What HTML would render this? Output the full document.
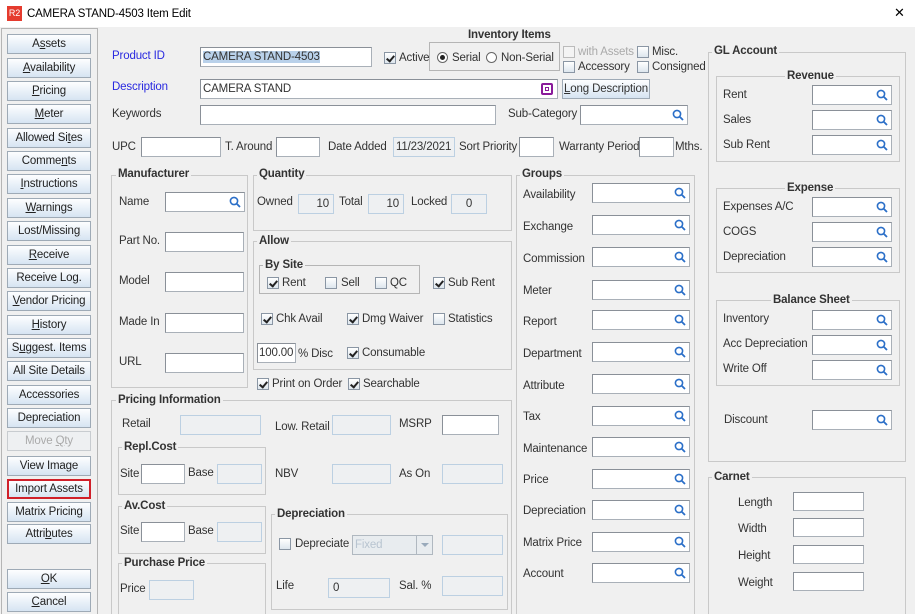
<!DOCTYPE html>
<html style="overflow:hidden;width:915px;height:614px"><head><meta charset="utf-8">
<style>
*{box-sizing:border-box;margin:0;padding:0}
body{width:915px;height:614px;overflow:hidden;background:#f0f0f0;font-family:"Liberation Sans",sans-serif;font-size:11.5px;letter-spacing:-0.15px;color:#333;position:relative}
.a{position:absolute}
.l{position:absolute;white-space:nowrap;line-height:14px}
.i{position:absolute;height:20px;background:#fff;border:1px solid #a9b0b8;border-top-color:#8a9098;border-left-color:#8a9098;line-height:18px;padding-left:2px;white-space:nowrap;overflow:hidden}
.ro{position:absolute;height:20px;background:#eef0f2;border:1px solid #bcd0e2;line-height:18px;padding:0 4px;text-align:right}
.g{position:absolute;border:1px solid #c9c9c9}
.lg{position:absolute;font-weight:bold;background:#f0f0f0;padding:0 2px;line-height:13px;white-space:nowrap;color:#333}
.b{position:absolute;left:7px;width:84px;height:20px;border:1px solid #9eaab6;background:linear-gradient(#fdfeff,#d6e4f2);text-align:center;line-height:18px;color:#222;white-space:nowrap}
.cb{position:absolute;width:12px;height:12px;border:1px solid #8a96a4;background:linear-gradient(#fff,#dde6ee)}
.cb.c::after{content:"";position:absolute;left:3px;top:1px;width:3px;height:6px;border-right:2px solid #222;border-bottom:2px solid #222;transform:rotate(40deg)}
.s{position:absolute;right:3px;top:3px;width:12px;height:12px}
u{text-decoration:underline}
</style></head><body>
<div class="a" style="left:0;top:0;width:915px;height:27px;background:#fff"></div>
<div class="a" style="left:7px;top:6px;width:15px;height:15px;background:#e53b2e;color:#fff;font-size:9px;line-height:15px;text-align:center">R2</div>
<div class="l" style="left:27px;top:7px;color:#000">CAMERA STAND-4503 Item Edit</div>
<div class="l" style="left:894px;top:6px;font-size:13px;color:#000">✕</div>

<div class="a" style="left:1px;top:28px;width:97px;height:586px;border:1px solid #b5b5b5;border-bottom:none"></div>
<div class="b" style="top:34px">A<u>s</u>sets</div>
<div class="b" style="top:58px"><u>A</u>vailability</div>
<div class="b" style="top:81px"><u>P</u>ricing</div>
<div class="b" style="top:104px"><u>M</u>eter</div>
<div class="b" style="top:128px">Allowed Si<u>t</u>es</div>
<div class="b" style="top:151px">Comme<u>n</u>ts</div>
<div class="b" style="top:174px"><u>I</u>nstructions</div>
<div class="b" style="top:198px"><u>W</u>arnings</div>
<div class="b" style="top:221px">Lost/Missin<u>g</u></div>
<div class="b" style="top:245px"><u>R</u>eceive</div>
<div class="b" style="top:268px">Receive Log.</div>
<div class="b" style="top:291px"><u>V</u>endor Pricing</div>
<div class="b" style="top:315px"><u>H</u>istory</div>
<div class="b" style="top:338px">S<u>u</u>ggest. Items</div>
<div class="b" style="top:361px">All Site Details</div>
<div class="b" style="top:385px">Accessories</div>
<div class="b" style="top:408px">Depreciation</div>
<div class="b" style="top:431px;color:#aaa;background:#eef0f2;border-color:#c8ccd0">Move <u>Q</u>ty</div>
<div class="b" style="top:456px">View Image</div>
<div class="b" style="top:479px;border:2px solid #d0202a;line-height:16px">Import Assets</div>
<div class="b" style="top:502px">Matrix Pricing</div>
<div class="b" style="top:524px">Attri<u>b</u>utes</div>
<div class="b" style="top:569px"><u>O</u>K</div>
<div class="b" style="top:592px"><u>C</u>ancel</div>

<div class="l" style="left:468px;top:28px;font-weight:bold">Inventory Items</div>
<div class="l" style="left:112px;top:49px;color:#2929e0">Product ID</div>
<div class="i" style="left:200px;top:47px;width:172px"><span style="background:#b9d1ea">CAMERA STAND-4503</span></div>
<div class="cb c" style="left:384px;top:52px"></div><div class="l" style="left:399px;top:51px">Active</div>
<div class="g" style="left:429px;top:42px;width:131px;height:29px;border-color:#b5b5b5"></div>
<div class="a" style="left:437px;top:52px;width:11px;height:11px;border:1px solid #666;border-radius:50%;background:#fff"><div class="a" style="left:2px;top:2px;width:5px;height:5px;border-radius:50%;background:#222"></div></div>
<div class="l" style="left:452px;top:51px">Serial</div>
<div class="a" style="left:486px;top:52px;width:11px;height:11px;border:1px solid #666;border-radius:50%;background:#fff"></div>
<div class="l" style="left:501px;top:51px">Non-Serial</div>
<div class="cb" style="left:563px;top:46px;border-color:#bbb;background:#f4f4f4"></div><div class="l" style="left:578px;top:45px;color:#aaa">with Assets</div>
<div class="cb" style="left:637px;top:46px"></div><div class="l" style="left:652px;top:45px">Misc.</div>
<div class="cb" style="left:563px;top:61px"></div><div class="l" style="left:578px;top:60px">Accessory</div>
<div class="cb" style="left:637px;top:61px"></div><div class="l" style="left:652px;top:60px">Consigned</div>

<div class="l" style="left:112px;top:80px;color:#2929e0">Description</div>
<div class="i" style="left:200px;top:79px;width:358px">CAMERA STAND</div>
<div class="a" style="left:541px;top:83px;width:12px;height:12px;border:2px solid #8a1a9a;border-radius:2px;background:#fff"><div class="a" style="left:2px;top:2px;width:4px;height:4px;border:1px solid #8a1a9a"></div></div>
<div class="a" style="left:562px;top:79px;width:88px;height:20px;border:1px solid #9eaab6;background:linear-gradient(#fdfeff,#d6e4f2);line-height:18px;text-align:center;white-space:nowrap"><u>L</u>ong Description</div>

<div class="l" style="left:112px;top:107px">Keywords</div>
<div class="i" style="left:200px;top:105px;width:296px"></div>
<div class="l" style="left:508px;top:107px">Sub-Category</div>
<div class="i" style="left:580px;top:105px;width:108px"><svg class="s" viewBox="0 0 12 12"><circle cx="5" cy="5" r="3.6" fill="none" stroke="#2b6fc8" stroke-width="1.6"/><path d="M7.6 7.6L11 11" stroke="#2b6fc8" stroke-width="1.8"/></svg></div>

<div class="l" style="left:112px;top:140px">UPC</div>
<div class="i" style="left:141px;top:137px;width:80px"></div>
<div class="l" style="left:225px;top:140px">T. Around</div>
<div class="i" style="left:276px;top:137px;width:44px"></div>
<div class="l" style="left:328px;top:140px">Date Added</div>
<div class="ro" style="left:393px;top:137px;width:62px;padding:0 2px;text-align:left">11/23/2021</div>
<div class="l" style="left:459px;top:140px">Sort Priority</div>
<div class="i" style="left:519px;top:137px;width:35px"></div>
<div class="l" style="left:559px;top:140px">Warranty Period</div>
<div class="i" style="left:639px;top:137px;width:35px"></div>
<div class="l" style="left:675px;top:140px">Mths.</div>

<div class="g" style="left:111px;top:175px;width:137px;height:213px"></div>
<div class="lg" style="left:116px;top:168px">Manufacturer</div>
<div class="l" style="left:119px;top:195px">Name</div>
<div class="i" style="left:165px;top:192px;width:80px"><svg class="s" viewBox="0 0 12 12"><circle cx="5" cy="5" r="3.6" fill="none" stroke="#2b6fc8" stroke-width="1.6"/><path d="M7.6 7.6L11 11" stroke="#2b6fc8" stroke-width="1.8"/></svg></div>
<div class="l" style="left:119px;top:234px">Part No.</div><div class="i" style="left:165px;top:232px;width:79px"></div>
<div class="l" style="left:119px;top:274px">Model</div><div class="i" style="left:165px;top:272px;width:79px"></div>
<div class="l" style="left:119px;top:315px">Made In</div><div class="i" style="left:165px;top:313px;width:79px"></div>
<div class="l" style="left:119px;top:355px">URL</div><div class="i" style="left:165px;top:353px;width:79px"></div>

<div class="g" style="left:253px;top:175px;width:259px;height:56px"></div>
<div class="lg" style="left:257px;top:168px">Quantity</div>
<div class="l" style="left:257px;top:195px">Owned</div><div class="ro" style="left:298px;top:194px;width:36px">10</div>
<div class="l" style="left:339px;top:195px">Total</div><div class="ro" style="left:368px;top:194px;width:36px">10</div>
<div class="l" style="left:411px;top:195px">Locked</div><div class="ro" style="left:451px;top:194px;width:36px;text-align:center">0</div>

<div class="g" style="left:253px;top:241px;width:259px;height:129px"></div>
<div class="lg" style="left:257px;top:235px">Allow</div>
<div class="g" style="left:259px;top:265px;width:161px;height:29px;border-color:#b5b5b5"></div>
<div class="lg" style="left:263px;top:259px">By Site</div>
<div class="cb c" style="left:267px;top:277px"></div><div class="l" style="left:282px;top:276px">Rent</div>
<div class="cb" style="left:325px;top:277px"></div><div class="l" style="left:341px;top:276px">Sell</div>
<div class="cb" style="left:375px;top:277px"></div><div class="l" style="left:390px;top:276px">QC</div>
<div class="cb c" style="left:433px;top:277px"></div><div class="l" style="left:448px;top:276px">Sub Rent</div>
<div class="cb c" style="left:261px;top:313px"></div><div class="l" style="left:276px;top:312px">Chk Avail</div>
<div class="cb c" style="left:347px;top:313px"></div><div class="l" style="left:362px;top:312px">Dmg Waiver</div>
<div class="cb" style="left:433px;top:313px"></div><div class="l" style="left:448px;top:312px">Statistics</div>
<div class="i" style="left:257px;top:343px;width:39px;padding-left:1px">100.00</div>
<div class="l" style="left:298px;top:347px">% Disc</div>
<div class="cb c" style="left:347px;top:347px"></div><div class="l" style="left:362px;top:346px">Consumable</div>
<div class="cb c" style="left:257px;top:378px"></div><div class="l" style="left:272px;top:377px">Print on Order</div>
<div class="cb c" style="left:348px;top:378px"></div><div class="l" style="left:363px;top:377px">Searchable</div>

<div class="g" style="left:111px;top:400px;width:401px;height:214px;border-bottom:none"></div>
<div class="lg" style="left:116px;top:394px">Pricing Information</div>
<div class="l" style="left:122px;top:417px">Retail</div><div class="ro" style="left:180px;top:415px;width:81px"></div>
<div class="l" style="left:275px;top:420px">Low. Retail</div><div class="ro" style="left:332px;top:415px;width:59px"></div>
<div class="l" style="left:399px;top:417px">MSRP</div><div class="i" style="left:442px;top:415px;width:57px"></div>
<div class="g" style="left:118px;top:447px;width:148px;height:48px"></div>
<div class="lg" style="left:122px;top:441px">Repl.Cost</div>
<div class="l" style="left:120px;top:467px">Site</div><div class="i" style="left:141px;top:464px;width:44px"></div>
<div class="l" style="left:188px;top:466px">Base</div><div class="ro" style="left:217px;top:464px;width:45px"></div>
<div class="l" style="left:275px;top:467px">NBV</div><div class="ro" style="left:332px;top:464px;width:59px"></div>
<div class="l" style="left:399px;top:467px">As On</div><div class="ro" style="left:442px;top:464px;width:61px"></div>
<div class="g" style="left:118px;top:506px;width:148px;height:48px"></div>
<div class="lg" style="left:122px;top:500px">Av.Cost</div>
<div class="l" style="left:120px;top:524px">Site</div><div class="i" style="left:141px;top:522px;width:44px"></div>
<div class="l" style="left:188px;top:524px">Base</div><div class="ro" style="left:217px;top:522px;width:45px"></div>
<div class="g" style="left:118px;top:563px;width:148px;height:51px;border-bottom:none"></div>
<div class="lg" style="left:122px;top:557px">Purchase Price</div>
<div class="l" style="left:120px;top:582px">Price</div><div class="ro" style="left:149px;top:580px;width:45px"></div>
<div class="g" style="left:271px;top:514px;width:237px;height:96px"></div>
<div class="lg" style="left:275px;top:508px">Depreciation</div>
<div class="cb" style="left:279px;top:538px"></div><div class="l" style="left:295px;top:537px">Depreciate</div>
<div class="a" style="left:352px;top:535px;width:81px;height:20px;border:1px solid #b0b8c0;background:#e8ecef;color:#b8c4d0;line-height:18px;padding-left:2px">Fixed<div class="a" style="right:0;top:0;width:16px;height:18px;border-left:1px solid #b0b8c0"><div class="a" style="left:4px;top:7px;border-left:4px solid transparent;border-right:4px solid transparent;border-top:4px solid #9ab"></div></div></div>
<div class="ro" style="left:442px;top:535px;width:61px"></div>
<div class="l" style="left:276px;top:579px">Life</div><div class="ro" style="left:328px;top:578px;width:62px;text-align:left">0</div>
<div class="l" style="left:399px;top:579px">Sal. %</div><div class="ro" style="left:442px;top:576px;width:61px"></div>

<div class="g" style="left:516px;top:175px;width:179px;height:439px;border-bottom:none"></div>
<div class="lg" style="left:520px;top:168px">Groups</div>

<div class="g" style="left:708px;top:52px;width:198px;height:410px"></div>
<div class="lg" style="left:712px;top:45px">GL Account</div>
<div class="g" style="left:716px;top:76px;width:184px;height:86px"></div>
<div class="lg" style="left:785px;top:70px">Revenue</div>
<div class="g" style="left:716px;top:188px;width:184px;height:85px"></div>
<div class="lg" style="left:785px;top:182px">Expense</div>
<div class="g" style="left:716px;top:300px;width:184px;height:86px"></div>
<div class="lg" style="left:771px;top:294px">Balance Sheet</div>

<div class="g" style="left:708px;top:477px;width:198px;height:137px;border-bottom:none"></div>
<div class="lg" style="left:712px;top:471px">Carnet</div>
<div class="l" style="left:738px;top:496px">Length</div><div class="i" style="left:793px;top:492px;width:71px;height:19px"></div>
<div class="l" style="left:738px;top:522px">Width</div><div class="i" style="left:793px;top:518px;width:71px;height:19px"></div>
<div class="l" style="left:738px;top:549px">Height</div><div class="i" style="left:793px;top:545px;width:71px;height:19px"></div>
<div class="l" style="left:738px;top:576px">Weight</div><div class="i" style="left:793px;top:572px;width:71px;height:19px"></div>

<div class="l" style="left:523px;top:188px">Availability</div><div class="i" style="left:592px;top:183px;width:98px"><svg class="s" viewBox="0 0 12 12"><circle cx="5" cy="5" r="3.6" fill="none" stroke="#2b6fc8" stroke-width="1.6"/><path d="M7.6 7.6L11 11" stroke="#2b6fc8" stroke-width="1.8"/></svg></div>
<div class="l" style="left:523px;top:220px">Exchange</div><div class="i" style="left:592px;top:215px;width:98px"><svg class="s" viewBox="0 0 12 12"><circle cx="5" cy="5" r="3.6" fill="none" stroke="#2b6fc8" stroke-width="1.6"/><path d="M7.6 7.6L11 11" stroke="#2b6fc8" stroke-width="1.8"/></svg></div>
<div class="l" style="left:523px;top:252px">Commission</div><div class="i" style="left:592px;top:247px;width:98px"><svg class="s" viewBox="0 0 12 12"><circle cx="5" cy="5" r="3.6" fill="none" stroke="#2b6fc8" stroke-width="1.6"/><path d="M7.6 7.6L11 11" stroke="#2b6fc8" stroke-width="1.8"/></svg></div>
<div class="l" style="left:523px;top:284px">Meter</div><div class="i" style="left:592px;top:280px;width:98px"><svg class="s" viewBox="0 0 12 12"><circle cx="5" cy="5" r="3.6" fill="none" stroke="#2b6fc8" stroke-width="1.6"/><path d="M7.6 7.6L11 11" stroke="#2b6fc8" stroke-width="1.8"/></svg></div>
<div class="l" style="left:523px;top:315px">Report</div><div class="i" style="left:592px;top:310px;width:98px"><svg class="s" viewBox="0 0 12 12"><circle cx="5" cy="5" r="3.6" fill="none" stroke="#2b6fc8" stroke-width="1.6"/><path d="M7.6 7.6L11 11" stroke="#2b6fc8" stroke-width="1.8"/></svg></div>
<div class="l" style="left:523px;top:347px">Department</div><div class="i" style="left:592px;top:342px;width:98px"><svg class="s" viewBox="0 0 12 12"><circle cx="5" cy="5" r="3.6" fill="none" stroke="#2b6fc8" stroke-width="1.6"/><path d="M7.6 7.6L11 11" stroke="#2b6fc8" stroke-width="1.8"/></svg></div>
<div class="l" style="left:523px;top:379px">Attribute</div><div class="i" style="left:592px;top:374px;width:98px"><svg class="s" viewBox="0 0 12 12"><circle cx="5" cy="5" r="3.6" fill="none" stroke="#2b6fc8" stroke-width="1.6"/><path d="M7.6 7.6L11 11" stroke="#2b6fc8" stroke-width="1.8"/></svg></div>
<div class="l" style="left:523px;top:410px">Tax</div><div class="i" style="left:592px;top:406px;width:98px"><svg class="s" viewBox="0 0 12 12"><circle cx="5" cy="5" r="3.6" fill="none" stroke="#2b6fc8" stroke-width="1.6"/><path d="M7.6 7.6L11 11" stroke="#2b6fc8" stroke-width="1.8"/></svg></div>
<div class="l" style="left:523px;top:442px">Maintenance</div><div class="i" style="left:592px;top:437px;width:98px"><svg class="s" viewBox="0 0 12 12"><circle cx="5" cy="5" r="3.6" fill="none" stroke="#2b6fc8" stroke-width="1.6"/><path d="M7.6 7.6L11 11" stroke="#2b6fc8" stroke-width="1.8"/></svg></div>
<div class="l" style="left:523px;top:473px">Price</div><div class="i" style="left:592px;top:469px;width:98px"><svg class="s" viewBox="0 0 12 12"><circle cx="5" cy="5" r="3.6" fill="none" stroke="#2b6fc8" stroke-width="1.6"/><path d="M7.6 7.6L11 11" stroke="#2b6fc8" stroke-width="1.8"/></svg></div>
<div class="l" style="left:523px;top:504px">Depreciation</div><div class="i" style="left:592px;top:500px;width:98px"><svg class="s" viewBox="0 0 12 12"><circle cx="5" cy="5" r="3.6" fill="none" stroke="#2b6fc8" stroke-width="1.6"/><path d="M7.6 7.6L11 11" stroke="#2b6fc8" stroke-width="1.8"/></svg></div>
<div class="l" style="left:523px;top:536px">Matrix Price</div><div class="i" style="left:592px;top:532px;width:98px"><svg class="s" viewBox="0 0 12 12"><circle cx="5" cy="5" r="3.6" fill="none" stroke="#2b6fc8" stroke-width="1.6"/><path d="M7.6 7.6L11 11" stroke="#2b6fc8" stroke-width="1.8"/></svg></div>
<div class="l" style="left:523px;top:567px">Account</div><div class="i" style="left:592px;top:563px;width:98px"><svg class="s" viewBox="0 0 12 12"><circle cx="5" cy="5" r="3.6" fill="none" stroke="#2b6fc8" stroke-width="1.6"/><path d="M7.6 7.6L11 11" stroke="#2b6fc8" stroke-width="1.8"/></svg></div>

<div class="l" style="left:723px;top:88px">Rent</div><div class="i" style="left:812px;top:85px;width:80px"><svg class="s" viewBox="0 0 12 12"><circle cx="5" cy="5" r="3.6" fill="none" stroke="#2b6fc8" stroke-width="1.6"/><path d="M7.6 7.6L11 11" stroke="#2b6fc8" stroke-width="1.8"/></svg></div>
<div class="l" style="left:723px;top:113px">Sales</div><div class="i" style="left:812px;top:110px;width:80px"><svg class="s" viewBox="0 0 12 12"><circle cx="5" cy="5" r="3.6" fill="none" stroke="#2b6fc8" stroke-width="1.6"/><path d="M7.6 7.6L11 11" stroke="#2b6fc8" stroke-width="1.8"/></svg></div>
<div class="l" style="left:723px;top:138px">Sub Rent</div><div class="i" style="left:812px;top:135px;width:80px"><svg class="s" viewBox="0 0 12 12"><circle cx="5" cy="5" r="3.6" fill="none" stroke="#2b6fc8" stroke-width="1.6"/><path d="M7.6 7.6L11 11" stroke="#2b6fc8" stroke-width="1.8"/></svg></div>
<div class="l" style="left:723px;top:200px">Expenses A/C</div><div class="i" style="left:812px;top:197px;width:80px"><svg class="s" viewBox="0 0 12 12"><circle cx="5" cy="5" r="3.6" fill="none" stroke="#2b6fc8" stroke-width="1.6"/><path d="M7.6 7.6L11 11" stroke="#2b6fc8" stroke-width="1.8"/></svg></div>
<div class="l" style="left:723px;top:225px">COGS</div><div class="i" style="left:812px;top:222px;width:80px"><svg class="s" viewBox="0 0 12 12"><circle cx="5" cy="5" r="3.6" fill="none" stroke="#2b6fc8" stroke-width="1.6"/><path d="M7.6 7.6L11 11" stroke="#2b6fc8" stroke-width="1.8"/></svg></div>
<div class="l" style="left:723px;top:250px">Depreciation</div><div class="i" style="left:812px;top:247px;width:80px"><svg class="s" viewBox="0 0 12 12"><circle cx="5" cy="5" r="3.6" fill="none" stroke="#2b6fc8" stroke-width="1.6"/><path d="M7.6 7.6L11 11" stroke="#2b6fc8" stroke-width="1.8"/></svg></div>
<div class="l" style="left:723px;top:312px">Inventory</div><div class="i" style="left:812px;top:310px;width:80px"><svg class="s" viewBox="0 0 12 12"><circle cx="5" cy="5" r="3.6" fill="none" stroke="#2b6fc8" stroke-width="1.6"/><path d="M7.6 7.6L11 11" stroke="#2b6fc8" stroke-width="1.8"/></svg></div>
<div class="l" style="left:723px;top:337px">Acc Depreciation</div><div class="i" style="left:812px;top:335px;width:80px"><svg class="s" viewBox="0 0 12 12"><circle cx="5" cy="5" r="3.6" fill="none" stroke="#2b6fc8" stroke-width="1.6"/><path d="M7.6 7.6L11 11" stroke="#2b6fc8" stroke-width="1.8"/></svg></div>
<div class="l" style="left:723px;top:362px">Write Off</div><div class="i" style="left:812px;top:360px;width:80px"><svg class="s" viewBox="0 0 12 12"><circle cx="5" cy="5" r="3.6" fill="none" stroke="#2b6fc8" stroke-width="1.6"/><path d="M7.6 7.6L11 11" stroke="#2b6fc8" stroke-width="1.8"/></svg></div>
<div class="l" style="left:724px;top:413px">Discount</div><div class="i" style="left:812px;top:410px;width:80px"><svg class="s" viewBox="0 0 12 12"><circle cx="5" cy="5" r="3.6" fill="none" stroke="#2b6fc8" stroke-width="1.6"/><path d="M7.6 7.6L11 11" stroke="#2b6fc8" stroke-width="1.8"/></svg></div>
</body></html>
